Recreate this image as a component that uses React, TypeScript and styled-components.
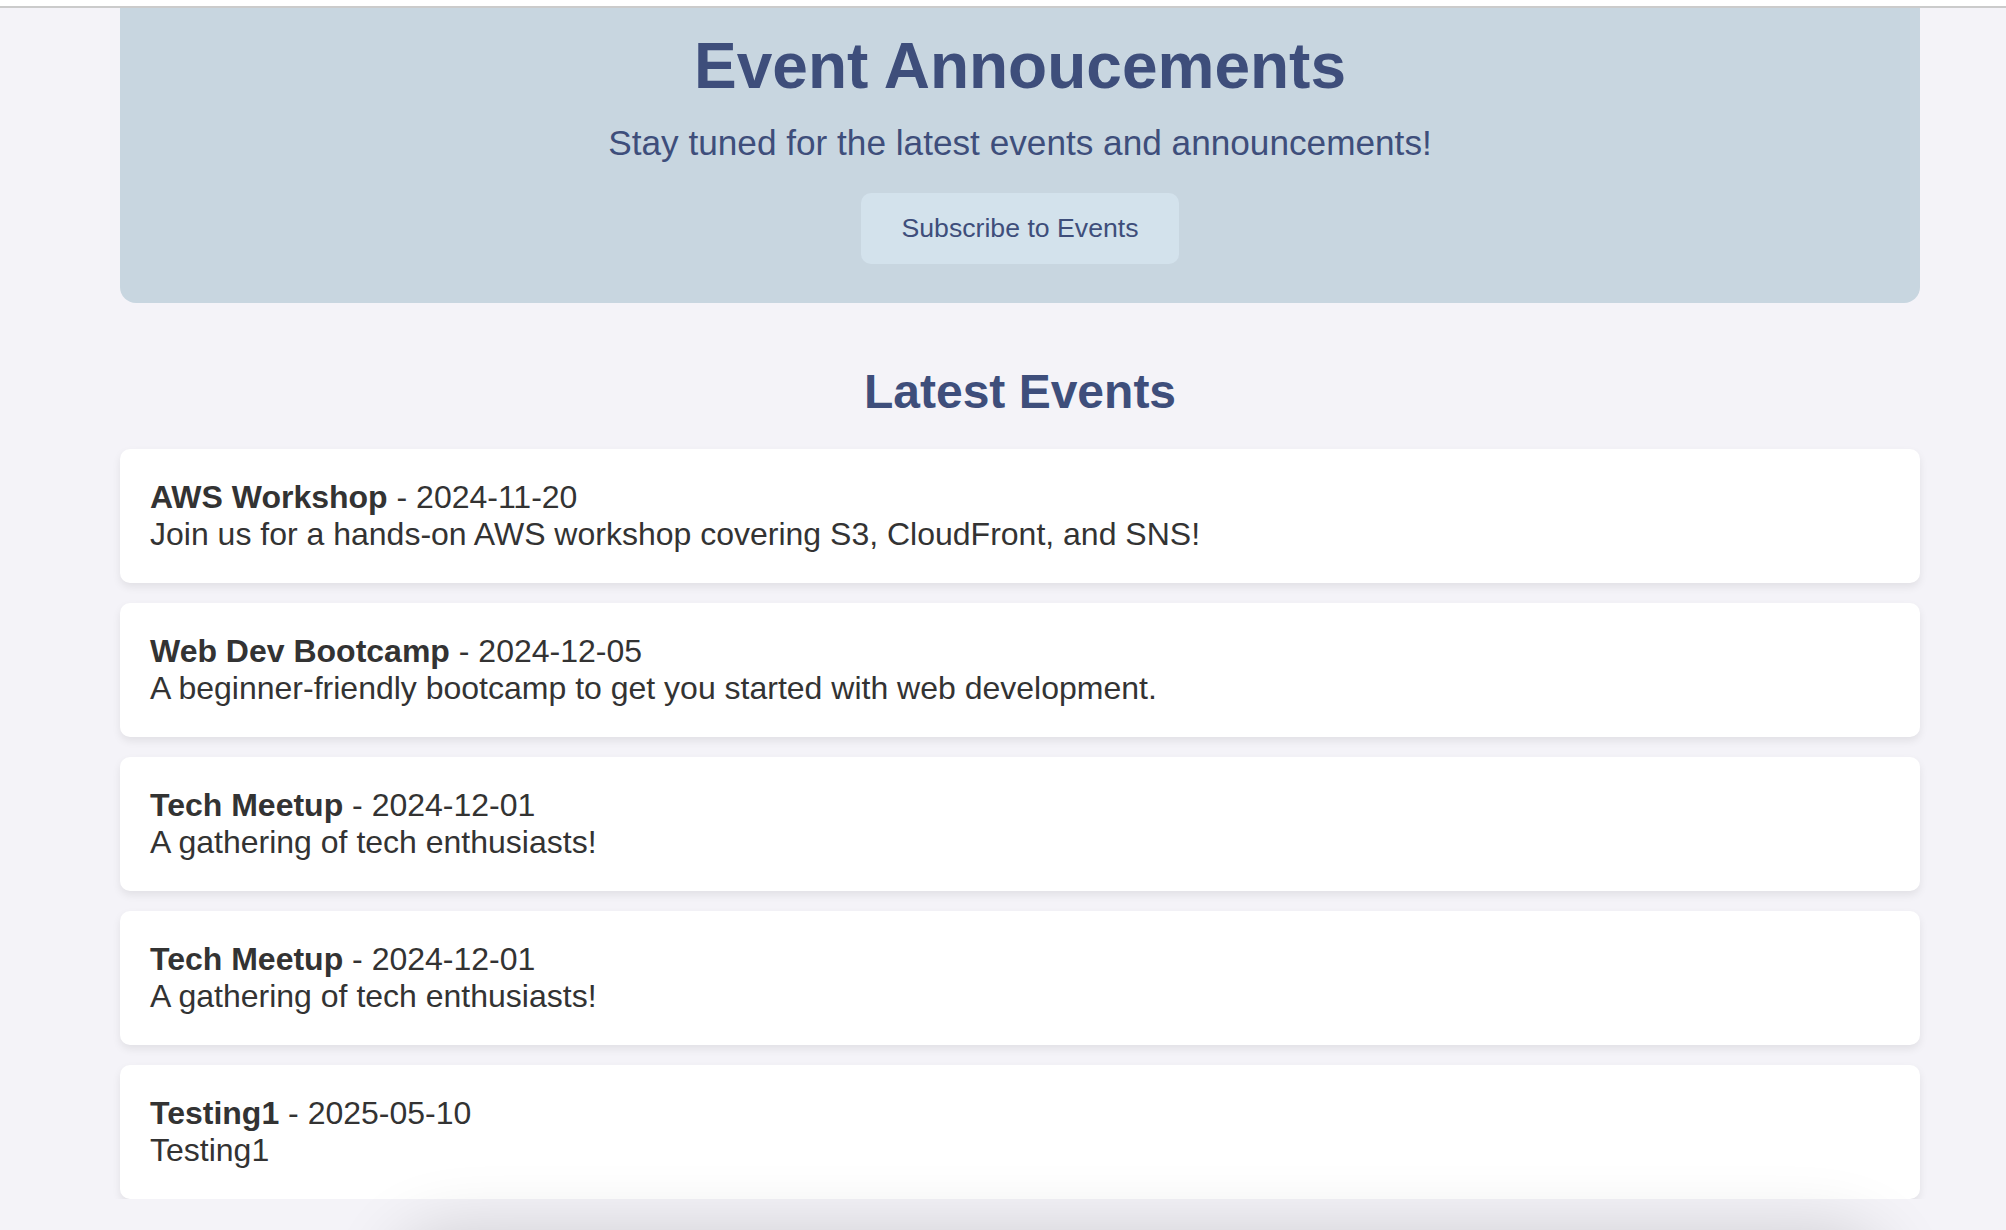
import React from "react";
import styled, {createGlobalStyle} from "styled-components";

interface EventItem {
  id: number;
  title: string;
  date: string;
  description: string;
}

const events: EventItem[] = [
  {
    id: 1,
    title: "AWS Workshop",
    date: "2024-11-20",
    description: "Join us for a hands-on AWS workshop covering S3, CloudFront, and SNS!",
  },
  {
    id: 2,
    title: "Web Dev Bootcamp",
    date: "2024-12-05",
    description: "A beginner-friendly bootcamp to get you started with web development.",
  },
  {id: 3, title: "Tech Meetup", date: "2024-12-01", description: "A gathering of tech enthusiasts!"},
  {id: 4, title: "Tech Meetup", date: "2024-12-01", description: "A gathering of tech enthusiasts!"},
  {id: 5, title: "Testing1", date: "2025-05-10", description: "Testing1"},
];

const App = () => {
  return (
    <>
      <GlobalStyle />
      <TopStrip />
      <Main>
        <Header>
          <Title>Event Annoucements</Title>
          <Subtitle>Stay tuned for the latest events and announcements!</Subtitle>
          <SubscribeButton>Subscribe to Events</SubscribeButton>
        </Header>

        <SectionTitle>Latest Events</SectionTitle>
        <EventList>
          {events.map((event) => (
            <EventCard key={event.id}>
              <strong>{event.title}</strong> - {event.date}
              <br />
              {event.description}
            </EventCard>
          ))}
        </EventList>
      </Main>
      {/* shadow of something sitting just below the fold */}
      <FloatingShadow />
    </>
  );
};

export default App;

const GlobalStyle = createGlobalStyle`
  html, body {
    margin: 0;
    padding: 0;
    background-color: #f4f3f8;
    font-family: "Liberation Sans", Arial, sans-serif;
    overflow: hidden;
  }
`;

const TopStrip = styled.div`
  height: 6px;
  background-color: #ffffff;
  border-bottom: 2px solid #cbcbcb;
`;

const Main = styled.main`
  width: 1800px;
  margin-left: 120px;
`;

const Header = styled.header`
  background-color: #c8d6e0;
  border-radius: 0 0 16px 16px;
  padding: 21px 0 39px;
  text-align: center;
  color: #3e4e7b;
`;

const Title = styled.h1`
  margin: 0 0 20px;
  font-size: 64px;
  line-height: 74px;
  font-weight: 700;
`;

const Subtitle = styled.p`
  margin: 0 0 30px;
  font-size: 35.2px;
  line-height: 40px;
`;

const SubscribeButton = styled.button`
  font-family: "Liberation Sans", Arial, sans-serif;
  font-size: 26.67px;
  line-height: 31px;
  padding: 20px 40px;
  border: none;
  border-radius: 10px;
  background-color: #d3e2ec;
  color: #3e4e7b;
  cursor: pointer;
`;

const SectionTitle = styled.h2`
  margin: 61px 0 30px;
  font-size: 48px;
  line-height: 55px;
  font-weight: 700;
  text-align: center;
  color: #3e4e7b;
`;

const EventList = styled.div`
  display: flex;
  flex-direction: column;
  gap: 20px;
`;

const EventCard = styled.div`
  background-color: #ffffff;
  border-radius: 10px;
  padding: 30px;
  box-shadow: 0 4px 8px rgba(0, 0, 0, 0.08);
  font-size: 32px;
  line-height: 37px;
  color: #333333;

  strong {
    font-weight: 700;
  }
`;

const FloatingShadow = styled.div`
  position: fixed;
  left: 420px;
  width: 1440px;
  top: 1258px;
  height: 120px;
  border-radius: 30px;
  box-shadow: 0 0 70px 26px rgba(0, 0, 0, 0.16);
  pointer-events: none;
`;
